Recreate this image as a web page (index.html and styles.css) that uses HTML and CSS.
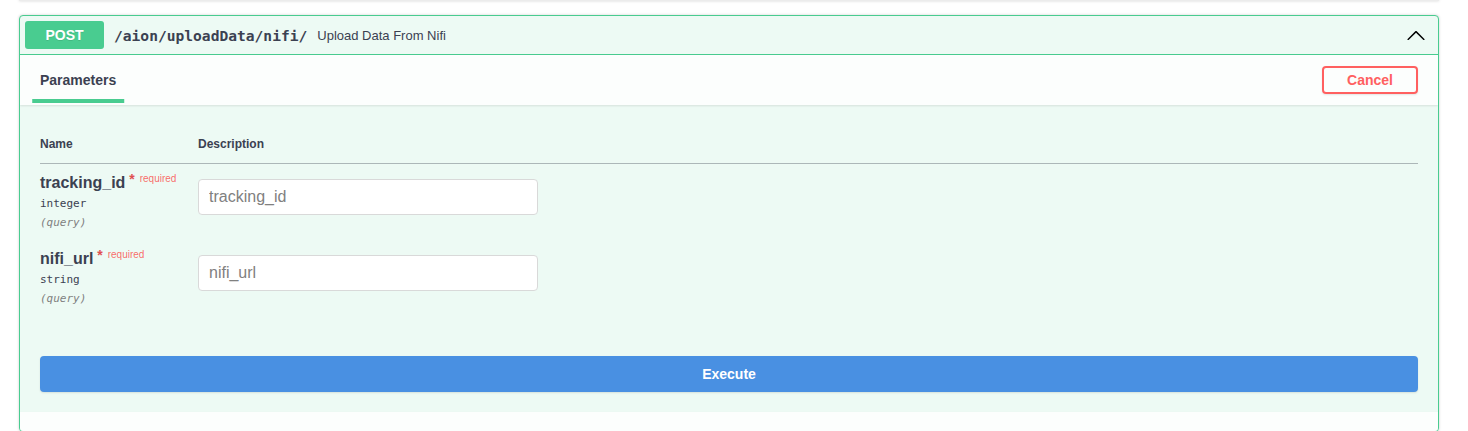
FILE: index.html
```html
<!DOCTYPE html>
<html>
<head>
<meta charset="utf-8">
<link rel="stylesheet" href="styles.css">
</head>
<body>
<div class="wrapper">
  <div class="prev-edge"></div>
  <div class="opblock">
    <div class="summary">
      <span class="method">POST</span>
      <span class="path">/aion/uploadData/nifi/</span>
      <span class="summary-desc">Upload Data From Nifi</span>
      <span class="spacer"></span>
      <svg class="arrow" width="20" height="20" viewBox="0 0 20 20"><path d="M17.418 14.908c.272.268.709.268.979 0s.271-.701 0-.969l-7.908-7.830c-.27-.268-.707-.268-.979 0l-7.908 7.830c-.27.268-.27.701 0 .969.271.268.709.268.979 0L10 7.767l7.418 7.141z" fill="#000"/></svg>
    </div>
    <div class="section-header">
      <div class="tab"><span class="tab-label">Parameters</span></div>
      <button class="btn cancel">Cancel</button>
    </div>
    <div class="table-container">
      <table class="parameters">
        <thead>
          <tr><th class="col-name">Name</th><th>Description</th></tr>
        </thead>
        <tbody>
          <tr>
            <td class="col-name">
              <div class="pname">tracking_id<span class="star">&nbsp;*</span><span class="req">required</span></div>
              <div class="ptype">integer</div>
              <div class="pin">(query)</div>
            </td>
            <td class="col-desc"><input type="text" placeholder="tracking_id"></td>
          </tr>
          <tr>
            <td class="col-name">
              <div class="pname">nifi_url<span class="star">&nbsp;*</span><span class="req">required</span></div>
              <div class="ptype">string</div>
              <div class="pin">(query)</div>
            </td>
            <td class="col-desc"><input type="text" placeholder="nifi_url"></td>
          </tr>
        </tbody>
      </table>
    </div>
    <div class="execute-wrapper">
      <button class="btn execute">Execute</button>
    </div>
    <div class="responses-header"></div>
  </div>
</div>
</body>
</html>
```
FILE: styles.css
```css
html, body {
  margin: 0;
  padding: 0;
  background: #fff;
  font-family: "Liberation Sans", Arial, sans-serif;
  color: #3b4151;
}
.wrapper {
  padding-left: 19px;
  width: 1420px;
}
.prev-edge {
  height: 1px;
  background: #f4f4f4;
  box-shadow: 0 0 3px rgba(0,0,0,.19);
  margin-bottom: 14px;
  margin-top: -1px;
  border-bottom: 1px solid #ececec;
}
.opblock {
  border: 1px solid #49cc90;
  border-radius: 4px;
  background: #edfaf4;
  box-shadow: 0 0 3px rgba(0,0,0,.19);
  overflow: hidden;
}
.summary {
  display: flex;
  align-items: center;
  padding: 5px;
  border-bottom: 1px solid #49cc90;
}
.method {
  min-width: 79px;
  padding: 6px 0;
  text-align: center;
  font-size: 14px;
  line-height: 16px;
  font-weight: 700;
  color: #fff;
  background: #49cc90;
  border-radius: 3px;
  text-shadow: 0 1px 0 rgba(0,0,0,.1);
}
.path {
  font-family: "DejaVu Sans Mono", monospace;
  font-size: 14.6px;
  font-weight: 700;
  padding: 0 10px;
  color: #3b4151;
}
.summary-desc {
  font-size: 13px;
  color: #3b4151;
}
.spacer { flex: 1; }
.arrow {
  margin-right: 7px;
  display: block;
}
.section-header {
  display: flex;
  align-items: center;
  justify-content: space-between;
  min-height: 50px;
  box-sizing: border-box;
  padding: 8px 20px;
  background: rgba(255,255,255,.8);
  box-shadow: 0 1px 2px rgba(0,0,0,.1);
}
.tab {
  font-size: 14px;
  font-weight: 700;
  line-height: 16px;
}
.tab-label {
  position: relative;
  display: inline-block;
}
.tab-label::after {
  content: "";
  position: absolute;
  left: 50%;
  bottom: -15px;
  width: 120%;
  height: 4px;
  transform: translateX(-50%);
  background: #49cc90;
}
.btn {
  font-family: "Liberation Sans", Arial, sans-serif;
  font-size: 14px;
  font-weight: 700;
  line-height: 16px;
  padding: 5px 23px;
  border: 2px solid #888;
  border-radius: 4px;
  background: transparent;
  box-shadow: 0 1px 2px rgba(0,0,0,.1);
}
.btn.cancel {
  border-color: #ff6060;
  color: #ff6060;
  padding: 4px 23px;
}
.table-container {
  padding: 20px;
}
table.parameters {
  width: 100%;
  border-collapse: collapse;
}
table.parameters th {
  text-align: left;
  font-size: 12px;
  font-weight: 700;
  line-height: 14px;
  padding: 12px 0;
  border-bottom: 1px solid rgba(59,65,81,.2);
}
.col-name {
  width: 158px;
}
td.col-name, td.col-desc {
  padding: 10px 0;
  vertical-align: top;
  text-align: left;
}
.pname {
  font-size: 16px;
  font-weight: 700;
  line-height: 18px;
}
.star {
  color: #e05050;
  font-size: 14px;
  line-height: 0;
  position: relative;
  top: -4px;
}
.req {
  color: rgba(255,0,0,.6);
  font-size: 10px;
  font-weight: 400;
  line-height: 0;
  position: relative;
  top: -6px;
  padding: 5px;
}
.ptype {
  font-family: "DejaVu Sans Mono", monospace;
  font-size: 11px;
  font-weight: 400;
  line-height: 14px;
  padding: 5px 0;
  color: #3b4151;
}
.pin {
  font-family: "DejaVu Sans Mono", monospace;
  font-size: 11px;
  font-style: italic;
  line-height: 14px;
  color: #808080;
}
input[type=text] {
  display: block;
  box-sizing: border-box;
  width: 340px;
  height: 36px;
  margin: 5px 0;
  padding: 8px 10px;
  border: 1px solid #d9d9d9;
  border-radius: 4px;
  background: #fff;
  font-family: "Liberation Sans", Arial, sans-serif;
  font-size: 16px;
  color: #3b4151;
}
input::placeholder {
  color: #808080;
}
.execute-wrapper {
  padding: 20px;
}
.btn.execute {
  display: block;
  width: 100%;
  padding: 8px 40px;
  background: #4990e2;
  border-color: #4990e2;
  color: #fff;
}
.responses-header {
  height: 19px;
  background: rgba(255,255,255,.8);
  box-shadow: 0 1px 2px rgba(0,0,0,.1);
}
```
